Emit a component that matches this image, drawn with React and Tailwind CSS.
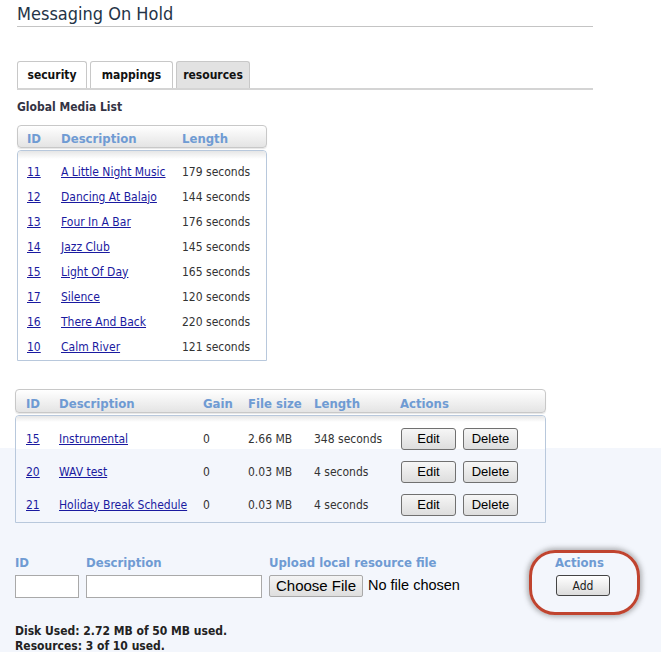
import React from "react";

const F = { fontFamily: '"DejaVu Sans Condensed", "DejaVu Sans", Tahoma, sans-serif' };
const A = { fontFamily: '"Liberation Sans", Arial, sans-serif' };

const media = [
  ["11", "A Little Night Music", "179 seconds"],
  ["12", "Dancing At Balajo", "144 seconds"],
  ["13", "Four In A Bar", "176 seconds"],
  ["14", "Jazz Club", "145 seconds"],
  ["15", "Light Of Day", "165 seconds"],
  ["17", "Silence", "120 seconds"],
  ["16", "There And Back", "220 seconds"],
  ["10", "Calm River", "121 seconds"],
];

const resources = [
  ["15", "Instrumental", "0", "2.66 MB", "348 seconds"],
  ["20", "WAV test", "0", "0.03 MB", "4 seconds"],
  ["21", "Holiday Break Schedule", "0", "0.03 MB", "4 seconds"],
];

function Btn({ children, w }) {
  return (
    <button
      style={A}
      className={`${w} h-[22px] rounded-[3px] border border-[#707070] bg-[linear-gradient(to_bottom,#f6f6f6,#dddddd)] text-[13px] leading-none text-black`}
    >
      {children}
    </button>
  );
}

export default function App() {
  return (
    <div
      style={F}
      className="w-[661px] h-[652px] overflow-hidden bg-[linear-gradient(to_bottom,#ffffff_448px,#f3f6fc_448px)] text-[#333] pl-[15px]"
    >
      <div className="ml-[2px] w-[576px]">
        <div className="h-[27px] border-b border-[#c4c4c4] pt-[3px] text-[18px] leading-[22px] text-[#243447]">
          Messaging On Hold
        </div>
        <div className="mt-[34px] flex gap-[3px] border-b-2 border-[#d4d4d4]">
          <div className="h-[27px] w-[70px] rounded-t-[3px] border border-b-0 border-[#c8c8c8] bg-white pt-[5px] text-center text-[12px] font-bold leading-[16px] text-[#111]">
            security
          </div>
          <div className="h-[27px] w-[83px] rounded-t-[3px] border border-b-0 border-[#c8c8c8] bg-white pt-[5px] text-center text-[12px] font-bold leading-[16px] text-[#111]">
            mappings
          </div>
          <div className="h-[27px] w-[74px] rounded-t-[3px] border border-b-0 border-[#c8c8c8] bg-[#e2e2e2] pt-[5px] text-center text-[12px] font-bold leading-[16px] text-[#111]">
            resources
          </div>
        </div>
        <div className="mt-[9px] text-[12px] font-bold leading-[16px] text-[#334]">Global Media List</div>

        <div className="mt-[10px] w-[250px]">
          <div className="flex h-[23px] rounded-[4px] border border-[#c8c8c8] bg-[linear-gradient(to_bottom,#ffffff,#e4e4e4)] pt-[5px] pl-[9px] text-[13px] font-bold leading-[16px] text-[#6f9bd3] shadow-[0_1px_1px_rgba(0,0,0,0.1)]">
            <span className="w-[34px]">ID</span>
            <span className="w-[121px]">Description</span>
            <span>Length</span>
          </div>
          <div className="mt-[2px] rounded-t-[4px] border border-[#b8c8dc] bg-white">
            <div className="h-[8px] rounded-t-[4px] bg-[linear-gradient(to_bottom,#e6e6e6,#ffffff)]" />
            {media.map(([id, d, l]) => (
              <div key={id + d} className="flex h-[25px] items-center pl-[9px] text-[12px]">
                <a className="w-[34px] text-[#1a1aa0] underline">{id}</a>
                <a className="w-[121px] text-[#1a1aa0] underline">{d}</a>
                <span className="text-[#333]">{l}</span>
              </div>
            ))}
            <div className="h-[1px]" />
          </div>
        </div>
      </div>

      <div className="mt-[28px] w-[531px]">
        <div className="flex h-[24px] rounded-[4px] border border-[#c8c8c8] bg-[linear-gradient(to_bottom,#ffffff,#e4e4e4)] pt-[6px] pl-[10px] text-[13px] font-bold leading-[16px] text-[#6f9bd3] shadow-[0_1px_1px_rgba(0,0,0,0.1)]">
          <span className="w-[33px]">ID</span>
          <span className="w-[144px]">Description</span>
          <span className="w-[45px]">Gain</span>
          <span className="w-[66px]">File size</span>
          <span className="w-[86px]">Length</span>
          <span>Actions</span>
        </div>
        <div className="mt-[2px] rounded-t-[4px] border border-[#b8c8dc] bg-[linear-gradient(to_bottom,#ffffff_33px,#f3f6fc_33px)]">
          <div className="h-[6px] rounded-t-[4px] bg-[linear-gradient(to_bottom,#e6e6e6,#ffffff)]" />
          {resources.map(([id, d, g, s, l]) => (
            <div key={id} className="flex h-[33px] items-center pl-[10px] text-[12px]">
              <a className="w-[33px] text-[#1a1aa0] underline">{id}</a>
              <a className="w-[144px] text-[#1a1aa0] underline">{d}</a>
              <span className="w-[45px]">{g}</span>
              <span className="w-[66px]">{s}</span>
              <span className="w-[87px]">{l}</span>
              <div className="flex gap-[7px]">
                <Btn w="w-[55px]">Edit</Btn>
                <Btn w="w-[55px]">Delete</Btn>
              </div>
            </div>
          ))}
          <div className="h-[1px]" />
        </div>
      </div>

      <div className="mt-[32px] flex items-start">
        <div className="w-[71px]">
          <div className="text-[13px] font-bold leading-[16px] text-[#6f9bd3]">ID</div>
          <input className="mt-[4px] h-[23px] w-[64px] border border-[#a9a9a9] bg-white" />
        </div>
        <div className="w-[183px]">
          <div className="text-[13px] font-bold leading-[16px] text-[#6f9bd3]">Description</div>
          <input className="mt-[4px] h-[23px] w-[176px] border border-[#a9a9a9] bg-white" />
        </div>
        <div className="w-[270px]">
          <div className="text-[13px] font-bold leading-[16px] text-[#6f9bd3]">Upload local resource file</div>
          <div className="mt-[4px] flex items-center" style={A}>
            <span className="flex h-[22px] w-[94px] items-center justify-center rounded-[2px] border border-[#a9a9a9] bg-[linear-gradient(to_bottom,#f4f4f4,#dedede)] text-[15px] text-black">
              Choose File
            </span>
            <span className="ml-[5px] text-[14.5px] text-black">No file chosen</span>
          </div>
        </div>
        <div className="relative ml-[16px]">
          <div className="text-[13px] font-bold leading-[16px] text-[#6f9bd3]">Actions</div>
          <button className="mt-[4px] ml-[1px] h-[21px] w-[54px] rounded-[3px] border border-[#444] bg-[linear-gradient(to_bottom,#ffffff,#dcdcdc)] text-[12px] leading-none text-[#222]">
            Add
          </button>
          <div className="pointer-events-none absolute left-[-26px] top-[-5px] h-[65px] w-[111px] rounded-[26px] border-[3px] border-[#c0442f] shadow-[0_0_5px_2px_rgba(90,90,90,0.45)]" />
        </div>
      </div>

      <div className="mt-[25px] text-[12px] font-bold leading-[15px] text-[#222]">
        <div>Disk Used: 2.72 MB of 50 MB used.</div>
        <div>Resources: 3 of 10 used.</div>
      </div>
    </div>
  );
}
